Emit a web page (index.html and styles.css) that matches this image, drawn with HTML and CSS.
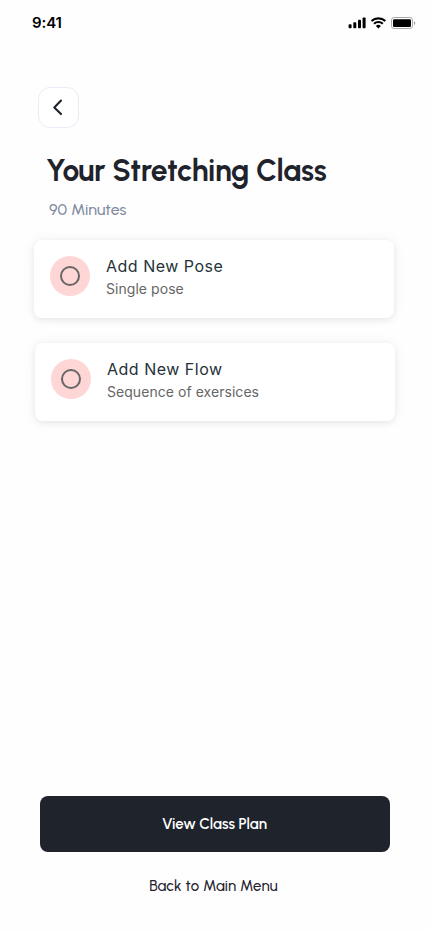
FILE: index.html
```html
<!DOCTYPE html>
<html lang="en">
<head>
<meta charset="utf-8">
<meta name="viewport" content="width=device-width, initial-scale=1">
<title>Your Stretching Class</title>
<link rel="stylesheet" href="styles.css">
</head>
<body>
<div class="screen">
  <header class="status">
    <span class="time">9:41</span>
    <svg class="indicators" width="68" height="14" viewBox="0 0 68 14" aria-hidden="true">
      <rect x="0.6" y="8.2" width="3" height="4" rx="0.9"/>
      <rect x="5.3" y="6.2" width="3" height="6" rx="0.9"/>
      <rect x="10" y="3.8" width="3" height="8.4" rx="0.9"/>
      <rect x="14.6" y="1.4" width="3" height="10.8" rx="0.9"/>
      <g fill="none" stroke="#000" stroke-width="2.1">
        <path d="M23.5 5.1a10 10 0 0 1 13.8 0"/>
        <path d="M26 7.8a6.4 6.4 0 0 1 8.8 0"/>
      </g>
      <path d="M27.9 9.9a3.9 3.9 0 0 1 5 0l-2.5 2.6z"/>
      <rect x="43.5" y="1.5" width="21" height="11" rx="2.6" fill="none" stroke="#a8a8a8"/>
      <rect x="45" y="3.3" width="18" height="7.6" rx="1.2"/>
      <path d="M66 5.2v3.8c.8-.3 1.3-1.1 1.3-1.9s-.5-1.6-1.3-1.9z" fill="#a0a0a0"/>
    </svg>
  </header>
  <button class="back" aria-label="Back">
    <svg width="39" height="39" viewBox="0 0 39 39"><path d="M22 12.6 15.3 19.4l6.7 6.7" fill="none" stroke="#1e232c" stroke-width="2.1" stroke-linecap="round" stroke-linejoin="round"/></svg>
  </button>
  <h1 class="title">Your Stretching Class</h1>
  <p class="duration">90 Minutes</p>
  <main class="options">
    <section class="card">
      <span class="badge"><span class="ring"></span></span>
      <div>
        <h2 class="card-title">Add New Pose</h2>
        <p class="card-note">Single pose</p>
      </div>
    </section>
    <section class="card card-flow">
      <span class="badge"><span class="ring"></span></span>
      <div>
        <h2 class="card-title">Add New Flow</h2>
        <p class="card-note">Sequence of exersices</p>
      </div>
    </section>
  </main>
  <footer class="actions">
    <button class="primary">View Class Plan</button>
    <button class="secondary">Back to Main Menu</button>
  </footer>
</div>
</body>
</html>
```
FILE: styles.css
```css
* { box-sizing: border-box; }
body, h1, h2, p { margin: 0; }
body { background: #fefefe; }
button { padding: 0; border: 0; background: none; font: inherit; }

.screen {
  display: flex;
  flex-direction: column;
  width: 430px;
  height: 932px;
  overflow: hidden;
  font-family: Urbanist, Lato, sans-serif;
  color: #1e232c;
}

.status {
  display: flex;
  justify-content: space-between;
  height: 44px;
  padding: 13px 14px 0 32px;
}
.time { font: 600 15px/20px Inter, sans-serif; color: #000; letter-spacing: -0.1px; }
.indicators { margin-top: 3px; }

.back {
  width: 41px;
  height: 41px;
  margin: 43px 0 0 38px;
  border: 1px solid #e8ecf4;
  border-radius: 12px;
  background: #fff;
  display: grid;
  place-items: center;
}

.title {
  margin: 23px 0 0 46px;
  font-size: 30px;
  font-weight: 700;
  line-height: 39px;
  letter-spacing: -0.3px;
  white-space: nowrap;
}
.duration {
  margin: 9px 0 0 49px;
  font-size: 16px;
  font-weight: 500;
  line-height: 22px;
  color: #838ba1;
}

.options {
  display: flex;
  flex-direction: column;
  gap: 25px;
  margin: 19px 0 0 34px;
}
.card {
  display: flex;
  gap: 16px;
  width: 360px;
  height: 78px;
  padding: 15px 16px;
  border-radius: 8px;
  background: #fff;
  box-shadow: 0 0 14px rgba(0, 0, 0, 0.05), 0 2px 6px rgba(0, 0, 0, 0.07);
  font-family: Inter, sans-serif;
}
.card-flow { margin-left: 1px; }
.badge {
  display: flex;
  flex: none;
  width: 40px;
  height: 40px;
  margin-top: 1.4px;
  padding: 10px;
  border-radius: 50%;
  background: #ffd6d6;
}
.ring { width: 20px; height: 20px; border: 2px solid #666; border-radius: 50%; }
.card-title {
  font-size: 16px;
  font-weight: 400;
  line-height: 22px;
  letter-spacing: 0.5px;
  color: #263238;
}
.card-note {
  margin-top: 3px;
  font-size: 14px;
  line-height: 18px;
  letter-spacing: 0.05px;
  color: #666;
}

.actions {
  display: flex;
  flex-direction: column;
  gap: 22px;
  margin: auto 40px 34px;
}
.primary {
  height: 56px;
  padding-right: 1px;
  border-radius: 8px;
  background: #1e232c;
  color: #fff;
  font-size: 15px;
  font-weight: 600;
}
.secondary {
  height: 24px;
  padding-right: 3px;
  font-size: 15px;
  font-weight: 500;
  letter-spacing: 0.15px;
  color: #1e232c;
}
```
